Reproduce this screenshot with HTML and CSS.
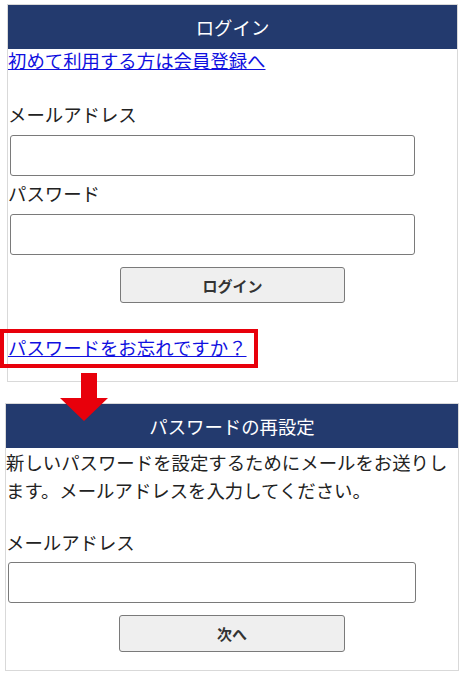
FILE: index.html
```html
<!DOCTYPE html>
<html lang="ja">
<head>
  <meta charset="UTF-8" />
  <meta name="viewport" content="width=device-width, initial-scale=1.0"/>
  <title>ログイン</title>
  <link rel="stylesheet" href="styles.css">
</head>
<body>
  <div class="page">

    <!-- Login -->
    <section class="panel panel-login">
      <h2 class="panel-title">ログイン</h2>
      <a href="#" class="link">初めて利用する方は会員登録へ</a>
      <form class="form">
        <label class="label label-first">メールアドレス</label>
        <input type="text" class="field" />
        <label class="label">パスワード</label>
        <input type="password" class="field" />
        <div class="actions">
          <button type="button" class="btn">ログイン</button>
        </div>
      </form>
      <a href="#" class="link link-forgot">パスワードをお忘れですか？</a>
    </section>

    <!-- Reset password -->
    <section class="panel panel-reset">
      <h2 class="panel-title">パスワードの再設定</h2>
      <p class="intro">新しいパスワードを設定するためにメールをお送りします。メールアドレスを入力してください。</p>
      <form class="form">
        <label class="label label-first">メールアドレス</label>
        <input type="text" class="field" />
        <div class="actions">
          <button type="button" class="btn">次へ</button>
        </div>
      </form>
    </section>

    <!-- annotations -->
    <div class="highlight"></div>
    <svg class="arrow" width="48" height="48" viewBox="0 0 48 48">
      <polygon points="21,0 37,0 37,25 48,25 24,48 0,25 21,25" fill="#e8000b"/>
    </svg>
  </div>
</body>
</html>
```

FILE: styles.css
```css
* {
  box-sizing: border-box;
}
body {
  margin: 0;
  background: #fff;
  color: #222;
  font-family: "Noto Sans CJK JP", "Noto Sans", sans-serif;
  font-size: 18.4px;
}
.page {
  position: relative;
  width: 466px;
  height: 678px;
  padding-top: 4px;
}

/* === Panels === */
.panel {
  border: 1px solid #d9d9d9;
  background: #fff;
}
.panel-login {
  margin: 0 8px 0 7px;
  padding-bottom: 22px;
}
.panel-reset {
  margin: 21px 7px 0 5px;
  padding-bottom: 18px;
}
.panel-title {
  margin: 0;
  height: 44px;
  line-height: 44px;
  background: #233a6e;
  color: #fff;
  font-size: 18.4px;
  font-weight: 400;
  text-align: center;
}
.link {
  display: block;
  width: fit-content;
  color: #1010e0;
  line-height: 23px;
}
.link-forgot {
  margin-top: 33px;
}
.intro {
  margin: 0;
  line-height: 28px;
}

/* === Form === */
.form {
  display: flex;
  flex-direction: column;
}
.label {
  display: block;
  line-height: 23px;
  margin-top: 6px;
}
.label-first {
  margin-top: 31px;
}
.panel-reset .label-first {
  margin-top: 27px;
}
.field {
  margin: 9px 0 0 2px;
  width: 405px;
  height: 41px;
  border: 1px solid #7a7a7a;
  border-radius: 3px;
  background: #fff;
  font-size: 16px;
}
.panel-reset .field {
  width: 408px;
  margin-top: 8px;
}
.actions {
  display: flex;
  justify-content: center;
  margin-top: 12px;
}
.btn {
  width: 225px;
  height: 36px;
  background: #efefef;
  border: 1px solid #7a7a7a;
  border-radius: 3px;
  color: #333;
  font-family: inherit;
  font-size: 15px;
  font-weight: 700;
  cursor: pointer;
}
.panel-reset .btn {
  width: 226px;
  height: 37px;
}

/* === Annotations === */
.highlight {
  position: absolute;
  left: 0;
  top: 329px;
  width: 258px;
  height: 39px;
  border: 4px solid #e8000b;
}
.arrow {
  position: absolute;
  left: 60px;
  top: 373px;
}
```
